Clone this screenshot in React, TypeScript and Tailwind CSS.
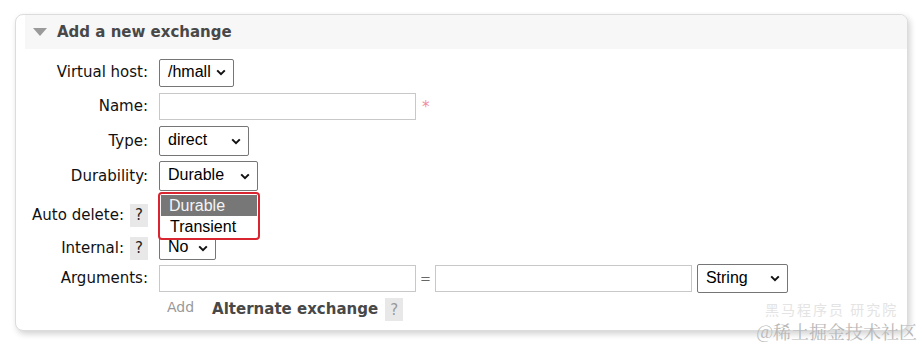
import React from 'react';

const LABEL = "font-['DejaVu_Sans',Verdana,sans-serif] text-[15px] text-[#111]";
const CTRL = "font-['Liberation_Sans',Arial,sans-serif] text-[16px] text-black";

function Chevron() {
    return (
        <svg width="10" height="7" viewBox="0 0 10 7" className="shrink-0">
            <path d="M1.2 1.4 L5 5.2 L8.8 1.4" fill="none" stroke="#111" strokeWidth="2" />
        </svg>
    );
}

function FakeSelect({ value, width, height = 28 }: { value: string; width: number; height?: number }) {
    return (
        <div
            className={`flex items-center justify-between border border-[#767676] rounded-[2px] bg-white pl-[8px] pr-[7px] ${CTRL}`}
            style={{ width, height }}
        >
            <span className="leading-none -mt-[2px]">{value}</span>
            <Chevron />
        </div>
    );
}

function TextBox({ width = 257 }: { width?: number }) {
    return <div className="h-[27px] border border-[#c8c8c8] bg-white" style={{ width }} />;
}

function Help({ faded = false }: { faded?: boolean }) {
    return (
        <span
            className={`inline-flex items-center justify-center w-[18px] h-[23px] bg-[#e8e8e8] font-['DejaVu_Sans',Verdana,sans-serif] text-[15px] ${faded ? 'text-[#999]' : 'text-[#222]'}`}
        >
            ?
        </span>
    );
}

function Row({ label, help, h, children }: { label: string; help?: boolean; h: number; children?: React.ReactNode }) {
    return (
        <div className="flex items-center" style={{ height: h }}>
            <div className={`w-[132px] flex items-center justify-end gap-[6px] ${LABEL}`}>
                <span>{label}</span>
                {help && <Help />}
            </div>
            <div className="ml-[11px] flex items-center">{children}</div>
        </div>
    );
}

export default function App() {
    return (
        <div className="w-[922px] h-[348px] bg-white relative overflow-hidden">
            <div className="ml-[15px] mt-[14px] w-[893px] h-[317px] rounded-[8px] border border-[#dcdcdc] bg-white shadow-[2px_3px_6px_rgba(0,0,0,0.18)] overflow-hidden">
                {/* header */}
                <div className="ml-[9px] h-[34px] bg-[#f7f7f7] flex items-center">
                    <svg width="14" height="8" viewBox="0 0 14 8" className="ml-[8px]">
                        <path d="M0 0 H14 L7 8 Z" fill="#9a9a9a" />
                    </svg>
                    <span className="ml-[10px] font-['DejaVu_Sans',Verdana,sans-serif] font-bold text-[15px] text-[#484848]">
                        Add a new exchange
                    </span>
                </div>

                {/* form */}
                <div className="mt-[9px] flex flex-col">
                    <Row label="Virtual host:" h={29}>
                        <FakeSelect value="/hmall" width={75} />
                    </Row>
                    <div className="h-[5px]" />
                    <Row label="Name:" h={29}>
                        <TextBox />
                        <span className="ml-[6px] mt-[2px] text-[#f08c9a] font-['DejaVu_Sans',sans-serif] text-[15px]">*</span>
                    </Row>
                    <div className="h-[5px]" />
                    <Row label="Type:" h={30}>
                        <FakeSelect value="direct" width={90} height={30} />
                    </Row>
                    <div className="h-[5px]" />
                    <Row label="Durability:" h={30}>
                        <FakeSelect value="Durable" width={99} height={30} />
                    </Row>
                    <div className="h-[12px]" />
                    <Row label="Auto delete:" help h={24} />
                    <div className="h-[9px]" />
                    <Row label="Internal:" help h={24}>
                        <FakeSelect value="No" width={57} height={23} />
                    </Row>
                    <div className="h-[4px]" />
                    <Row label="Arguments:" h={29}>
                        <TextBox />
                        <span className="mx-[4px] text-[#666] font-['DejaVu_Sans',sans-serif] text-[13px]">=</span>
                        <TextBox />
                        <div className="ml-[5px]">
                            <FakeSelect value="String" width={91} height={29} />
                        </div>
                    </Row>
                    <div className="h-[4px]" />
                    <div className="flex items-center h-[24px] pl-[151px]">
                        <span className="font-['DejaVu_Sans',Verdana,sans-serif] text-[14px] text-[#999] -mt-[4px]">Add</span>
                        <span className="ml-[18px] font-['DejaVu_Sans',Verdana,sans-serif] font-bold text-[15px] text-[#484848]">
                            Alternate exchange
                        </span>
                        <span className="ml-[7px]">
                            <Help faded />
                        </span>
                    </div>
                </div>
            </div>

            {/* open dropdown list */}
            <div className="absolute left-[158px] top-[192px] w-[102px] border-2 border-[#d92530] rounded-[4px] bg-white p-[1px] font-['Liberation_Sans',Arial,sans-serif] text-[16px] leading-[21px]">
                <div className="bg-[#777777] text-[#f4f4f4] pl-[8px]">Durable</div>
                <div className="text-black pl-[9px]">Transient</div>
            </div>

            {/* watermark */}
            <div className="absolute left-[765px] top-[302px] font-['Noto_Sans_CJK_SC',sans-serif] text-[14px] leading-none text-[#e4e4e4] tracking-[2px]">
                黑马程序员 研究院
            </div>
            <div className="absolute right-[5px] top-[322px] font-['Noto_Serif_CJK_SC','Noto_Sans_CJK_SC',serif] text-[18px] text-[#b8b8b8] leading-none">
                @稀土掘金技术社区
            </div>
        </div>
    );
}
